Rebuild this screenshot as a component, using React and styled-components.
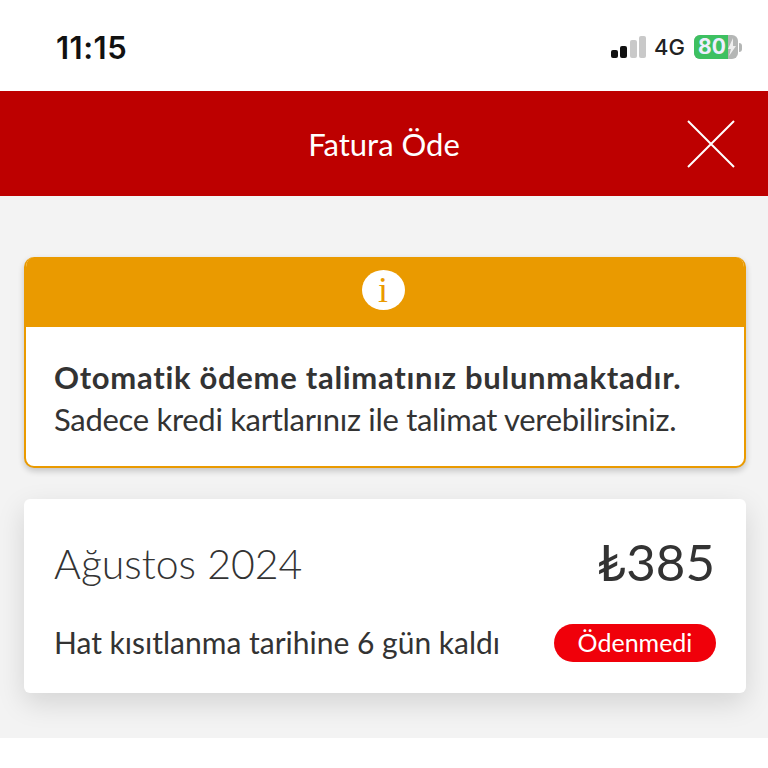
import React from "react";
import styled, { createGlobalStyle } from "styled-components";

const Global = createGlobalStyle`
  html, body { margin: 0; padding: 0; background: #fff; }
  body { font-family: Lato, "Noto Sans", sans-serif; color: #333; }
`;
const Page = styled.div`width: 768px; height: 768px; overflow: hidden; display: flex; flex-direction: column;`;
const StatusBar = styled.div`height: 91px; box-sizing: border-box; padding: 3px 26px 0 56px; display: flex; align-items: center; justify-content: space-between; background: #fff;`;
const Clock = styled.div`font: 600 31px Inter, sans-serif; color: #111; letter-spacing: 0.5px;`;
const StatusRight = styled.div`display: flex; align-items: center;`;
const Network = styled.span`font: 500 22px Inter, sans-serif; color: #222; margin: 0 9px 0 8px;`;
const Battery = styled.div`width: 44px; height: 24px; border-radius: 6px; overflow: hidden; background: #b4b6b5; display: flex;`;
const BatteryFill = styled.div`width: 34px; background: #3dc061; color: #eef; font: 700 21px/24px Inter, sans-serif; padding-left: 4px; box-sizing: border-box; white-space: nowrap; overflow: visible;`;
const BatteryNub = styled.div`width: 3px; height: 9px; margin-left: 1px; border-radius: 0 3px 3px 0; background: #b4b6b5;`;
const Header = styled.header`height: 105px; background: #bd0000; display: flex; align-items: center; justify-content: center; position: relative;`;
const Title = styled.h1`margin: 0; font: 400 31px Lato, sans-serif; color: #fff;`;
const Close = styled.svg`position: absolute; right: 33px; top: 29px;`;
const Body = styled.main`height: 542px; box-sizing: border-box; background: #f3f3f3; padding: 61px 22px 0 24px; display: flex; flex-direction: column; gap: 31px;`;
const Alert = styled.section`height: 211px; box-sizing: border-box; background: #fff; border: 2px solid #ea9a00; border-top: 0; border-radius: 10px; box-shadow: 0 3px 6px rgba(0,0,0,.2); overflow: hidden;`;
const AlertBar = styled.div`height: 70px; margin: 0 -2px; background: #ea9a00; display: flex; align-items: center; justify-content: center;`;
const InfoIcon = styled.div`width: 43px; height: 40px; margin: -5px 0 0 -4px; border-radius: 50%; background: #fff; color: #ea9a00; font: 400 36px/40px "Liberation Serif", serif; text-align: center;`;
const AlertText = styled.div`padding: 29px 0 0 28px; line-height: 42px;`;
const Strong = styled.div`font-weight: 700; font-size: 31px; letter-spacing: 0.7px; white-space: nowrap;`;
const Line = styled.div`font-weight: 400; font-size: 31px; letter-spacing: -0.3px; white-space: nowrap;`;
const Card = styled.section`height: 194px; box-sizing: border-box; background: #fff; border-radius: 6px; box-shadow: 0 10px 28px rgba(0,0,0,.13); padding: 32px 31px 0 30px;`;
const Row = styled.div`display: flex; justify-content: space-between; align-items: center; height: ${p => p.$h}px; margin-bottom: ${p => p.$mb || 0}px;`;
const Month = styled.div`font-size: 41px; font-weight: 300; margin-bottom: 2px;`;
const Amount = styled.div`font-size: 51px; font-weight: 400; margin-bottom: 6px;`;
const Note = styled.div`font-size: 30px; white-space: nowrap; margin-bottom: 3px;`;
const Badge = styled.div`width: 162px; height: 38px; margin-right: -1px; border-radius: 19px; background: #f0000a; color: #fff; font-size: 25px; line-height: 36px; text-align: center;`;

const Signal = () => (
  <svg width="35" height="23" viewBox="0 0 35 23">
    <rect x="0" y="14" width="7" height="8" rx="2" fill="#111" />
    <rect x="9" y="10" width="7" height="12" rx="2" fill="#111" />
    <rect x="19" y="4" width="7" height="18" rx="2" fill="#c9c9c9" />
    <rect x="28" y="0" width="7" height="22" rx="2" fill="#c9c9c9" />
  </svg>
);

export default function App() {
  return (
    <Page>
      <Global />
      <StatusBar>
        <Clock>11:15</Clock>
        <StatusRight>
          <Signal />
          <Network>4G</Network>
          <Battery>
            <BatteryFill>80</BatteryFill>
            <svg width="10" height="24" viewBox="0 0 10 24"><path d="M5 3 0 14h3l-2 7 7-10H5z" fill="#eee" /></svg>
          </Battery>
          <BatteryNub />
        </StatusRight>
      </StatusBar>
      <Header>
        <Title>Fatura Öde</Title>
        <Close width="48" height="48" viewBox="0 0 48 48">
          <path d="M1 1 47 47M47 1 1 47" stroke="#fff" strokeWidth="2" fill="none" />
        </Close>
      </Header>
      <Body>
        <Alert>
          <AlertBar><InfoIcon>i</InfoIcon></AlertBar>
          <AlertText>
            <Strong>Otomatik ödeme talimatınız bulunmaktadır.</Strong>
            <Line>Sadece kredi kartlarınız ile talimat verebilirsiniz.</Line>
          </AlertText>
        </Alert>
        <Card>
          <Row $h={66} $mb={27}>
            <Month>Ağustos 2024</Month>
            <Amount>₺385</Amount>
          </Row>
          <Row $h={38}>
            <Note>Hat kısıtlanma tarihine 6 gün kaldı</Note>
            <Badge>Ödenmedi</Badge>
          </Row>
        </Card>
      </Body>
    </Page>
  );
}
